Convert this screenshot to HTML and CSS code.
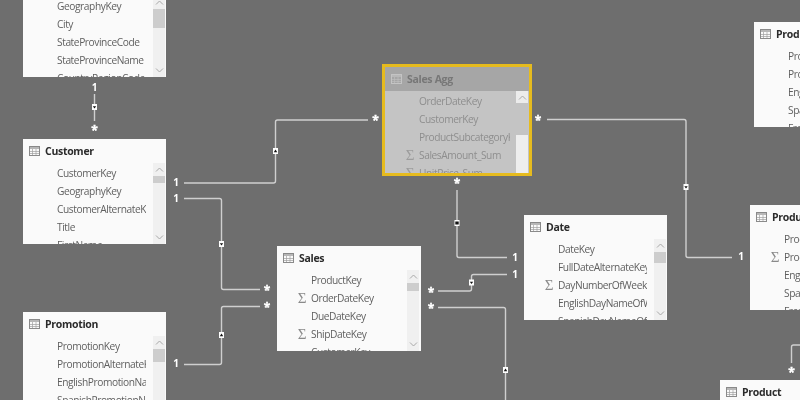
FILE: index.html
```html
<!DOCTYPE html>
<html lang="en">
<head>
<meta charset="utf-8">
<title>Model view</title>
<link rel="stylesheet" href="styles.css">
</head>
<body>
<svg width="0" height="0" class="defs">
  <defs>
    <g id="ticon">
      <rect x="0.5" y="0.5" width="10" height="9" fill="none" stroke="currentColor"/>
      <rect x="0.5" y="0.5" width="10" height="2.5" fill="currentColor" opacity=".6"/>
      <path d="M0 5.5H11M0 7.5H11M3.5 3V10M7 3V10" stroke="currentColor" stroke-width=".7" opacity=".8"/>
    </g>
  </defs>
</svg>
<main class="stage">
  <section class="table t-geo">
    <header class="head"><svg class="ticon" width="11" height="10"><use href="#ticon"/></svg><h2>Geography</h2></header>
    <div class="body">
      <div class="rows">
        <div class="row"><span class="name">GeographyKey</span></div>
        <div class="row"><span class="name">City</span></div>
        <div class="row"><span class="name">StateProvinceCode</span></div>
        <div class="row"><span class="name">StateProvinceName</span></div>
        <div class="row"><span class="name">CountryRegionCode</span></div>
      </div>
      <div class="scroll">
        <div class="btn"><svg width="9" height="5"><path d="M1 4.5L4.5 1L8 4.5" class="chev"/></svg></div>
        <div class="thumb th-19"></div>
        <div class="btn end"><svg width="9" height="5"><path d="M1 .5L4.5 4L8 .5" class="chev"/></svg></div>
      </div>
    </div>
  </section>

  <section class="table t-customer">
    <header class="head"><svg class="ticon" width="11" height="10"><use href="#ticon"/></svg><h2>Customer</h2></header>
    <div class="body">
      <div class="rows">
        <div class="row"><span class="name">CustomerKey</span></div>
        <div class="row"><span class="name">GeographyKey</span></div>
        <div class="row"><span class="name">CustomerAlternateKey</span></div>
        <div class="row"><span class="name">Title</span></div>
        <div class="row"><span class="name">FirstName</span></div>
      </div>
      <div class="scroll">
        <div class="btn"><svg width="9" height="5"><path d="M1 4.5L4.5 1L8 4.5" class="chev"/></svg></div>
        <div class="thumb th-7"></div>
        <div class="btn end"><svg width="9" height="5"><path d="M1 .5L4.5 4L8 .5" class="chev"/></svg></div>
      </div>
    </div>
  </section>

  <section class="table t-promotion">
    <header class="head"><svg class="ticon" width="11" height="10"><use href="#ticon"/></svg><h2>Promotion</h2></header>
    <div class="body">
      <div class="rows">
        <div class="row"><span class="name">PromotionKey</span></div>
        <div class="row"><span class="name">PromotionAlternateKey</span></div>
        <div class="row"><span class="name">EnglishPromotionName</span></div>
        <div class="row"><span class="name">SpanishPromotionName</span></div>
        <div class="row"><span class="name">FrenchPromotionName</span></div>
      </div>
      <div class="scroll">
        <div class="btn"><svg width="9" height="5"><path d="M1 4.5L4.5 1L8 4.5" class="chev"/></svg></div>
        <div class="thumb th-13"></div>
        <div class="btn end"><svg width="9" height="5"><path d="M1 .5L4.5 4L8 .5" class="chev"/></svg></div>
      </div>
    </div>
  </section>

  <section class="table t-sales">
    <header class="head"><svg class="ticon" width="11" height="10"><use href="#ticon"/></svg><h2>Sales</h2></header>
    <div class="body">
      <div class="rows">
        <div class="row"><span class="name">ProductKey</span></div>
        <div class="row"><span class="sig">Σ</span><span class="name">OrderDateKey</span></div>
        <div class="row"><span class="name">DueDateKey</span></div>
        <div class="row"><span class="sig">Σ</span><span class="name">ShipDateKey</span></div>
        <div class="row"><span class="name">CustomerKey</span></div>
      </div>
      <div class="scroll">
        <div class="btn"><svg width="9" height="5"><path d="M1 4.5L4.5 1L8 4.5" class="chev"/></svg></div>
        <div class="thumb th-8"></div>
        <div class="btn end"><svg width="9" height="5"><path d="M1 .5L4.5 4L8 .5" class="chev"/></svg></div>
      </div>
    </div>
  </section>

  <section class="table t-date">
    <header class="head"><svg class="ticon" width="11" height="10"><use href="#ticon"/></svg><h2>Date</h2></header>
    <div class="body">
      <div class="rows">
        <div class="row"><span class="name">DateKey</span></div>
        <div class="row"><span class="name">FullDateAlternateKey</span></div>
        <div class="row"><span class="sig">Σ</span><span class="name">DayNumberOfWeek</span></div>
        <div class="row"><span class="name">EnglishDayNameOfWeek</span></div>
        <div class="row"><span class="name">SpanishDayNameOfWeek</span></div>
      </div>
      <div class="scroll">
        <div class="btn"><svg width="9" height="5"><path d="M1 4.5L4.5 1L8 4.5" class="chev"/></svg></div>
        <div class="thumb th-11"></div>
        <div class="btn end"><svg width="9" height="5"><path d="M1 .5L4.5 4L8 .5" class="chev"/></svg></div>
      </div>
    </div>
  </section>

  <section class="table t-prod-top">
    <header class="head"><svg class="ticon" width="11" height="10"><use href="#ticon"/></svg><h2>ProductSubcategory</h2></header>
    <div class="body">
      <div class="rows">
        <div class="row"><span class="name">ProductSubcategoryKey</span></div>
        <div class="row"><span class="name">ProductSubcategoryAlt</span></div>
        <div class="row"><span class="name">EnglishProductSub</span></div>
        <div class="row"><span class="name">SpanishProductSub</span></div>
        <div class="row"><span class="name">FrenchProductSub</span></div>
      </div>
    </div>
  </section>

  <section class="table t-prod-mid">
    <header class="head"><svg class="ticon" width="11" height="10"><use href="#ticon"/></svg><h2>ProductCategory</h2></header>
    <div class="body">
      <div class="rows">
        <div class="row"><span class="name">ProductKey</span></div>
        <div class="row"><span class="sig">Σ</span><span class="name">ProductSubKey</span></div>
        <div class="row"><span class="name">EnglishName</span></div>
        <div class="row"><span class="name">SpanishName</span></div>
        <div class="row"><span class="name">FrenchName</span></div>
      </div>
    </div>
  </section>

  <section class="table t-product">
    <header class="head"><svg class="ticon" width="11" height="10"><use href="#ticon"/></svg><h2>Product</h2></header>
  </section>

  <svg class="links" width="800" height="400" viewBox="0 0 800 400">
    <g class="wire">
      <path d="M94.5 94V121"/>
      <path d="M184 183H273.5Q275.5 183 275.5 181V122Q275.5 120 277.5 120H368"/>
      <path d="M184 198.5H219.5Q221.5 198.5 221.5 200.5V287.5Q221.5 289.5 223.5 289.5H260"/>
      <path d="M184 364.5H219.5Q221.5 364.5 221.5 362.5V308.5Q221.5 306.5 223.5 306.5H260"/>
      <path d="M457 190V255.5Q457 257.5 459 257.5H507"/>
      <path d="M438 291H469.5Q471.5 291 471.5 289V276.5Q471.5 274.5 473.5 274.5H507"/>
      <path d="M438 307.5H503.5Q505.5 307.5 505.5 309.5V400"/>
      <path d="M547 119.5H684Q686 119.5 686 121.5V255.5Q686 257.5 688 257.5H732"/>
      <path d="M791.5 363V347Q791.5 345 793.5 345H800"/>
    </g>
    <g class="mark">
      <rect x="92" y="104" width="5" height="6"/><path d="M92.8 106.2H96.2L94.5 108.5Z" class="tri"/>
      <rect x="273" y="148" width="5" height="6"/><path d="M273.8 152.2H277.2L275.5 149.6Z" class="tri"/>
      <rect x="219" y="241" width="5" height="6"/><path d="M219.8 243.2H223.2L221.5 245.5Z" class="tri"/>
      <rect x="219" y="332" width="5" height="6"/><path d="M219.8 336.2H223.2L221.5 333.6Z" class="tri"/>
      <rect x="454.5" y="220" width="5" height="6"/><path d="M455.3 221.5H458.7V224.5H455.3Z" class="tri"/>
      <rect x="469" y="279.5" width="5" height="6"/><path d="M469.8 281.7H473.2L471.5 284Z" class="tri"/>
      <rect x="503" y="367" width="5" height="6"/><path d="M503.8 371.2H507.2L505.5 368.6Z" class="tri"/>
      <rect x="683.5" y="184" width="5" height="6"/><path d="M684.3 186.2H687.7L686 188.5Z" class="tri"/>
    </g>
    <g class="lab">
      <text x="94.5" y="90.5">1</text>
      <text x="176" y="185.5">1</text>
      <text x="176" y="201.5">1</text>
      <text x="176" y="366.5">1</text>
      <text x="515" y="260.5">1</text>
      <text x="515" y="277.5">1</text>
      <text x="741" y="259.5">1</text>
    </g>
    <g class="star">
      <text x="94.5" y="135">*</text>
      <text x="375.5" y="125">*</text>
      <text x="267" y="295">*</text>
      <text x="267" y="312">*</text>
      <text x="431" y="297">*</text>
      <text x="431" y="313">*</text>
      <text x="457" y="188">*</text>
      <text x="538" y="125">*</text>
      <text x="791.5" y="377">*</text>
    </g>
  </svg>

  <section class="table t-agg">
    <header class="head"><svg class="ticon" width="11" height="10"><use href="#ticon"/></svg><h2>Sales Agg</h2></header>
    <div class="body">
      <div class="rows">
        <div class="row"><span class="name">OrderDateKey</span></div>
        <div class="row"><span class="name">CustomerKey</span></div>
        <div class="row"><span class="name">ProductSubcategoryKey</span></div>
        <div class="row"><span class="sig">Σ</span><span class="name">SalesAmount_Sum</span></div>
        <div class="row"><span class="sig">Σ</span><span class="name">UnitPrice_Sum</span></div>
      </div>
      <div class="scroll">
        <div class="btn"><svg width="9" height="5"><path d="M1 4.5L4.5 1L8 4.5" class="chev"/></svg></div>
        <div class="thumb th-36"></div>
        <div class="btn end"><svg width="9" height="5"><path d="M1 .5L4.5 4L8 .5" class="chev"/></svg></div>
      </div>
    </div>
  </section>
</main>
</body>
</html>
```
FILE: styles.css
```css
* { box-sizing: border-box; }
html, body { margin: 0; padding: 0; overflow: hidden; }
.defs { position: absolute; }
.stage {
  position: relative;
  width: 800px;
  height: 400px;
  overflow: hidden;
  background: #6e6e6e;
  font-family: "Open Sans", "Noto Sans", sans-serif;
  filter: blur(0.3px);
}

.table {
  position: absolute;
  width: 143px;
  height: 105px;
  background: #fafafa;
  color: #5f5f5f;
  overflow: hidden;
  display: flex;
  flex-direction: column;
}
.t-geo { left: 23px; top: -28px; }
.t-customer { left: 23px; top: 139px; }
.t-promotion { left: 23px; top: 312px; }
.t-sales { left: 277px; top: 246px; height: 105px; width: 144px; }
.t-date { left: 524px; top: 215px; }
.t-prod-top { left: 754px; top: 22px; }
.t-prod-mid { left: 750px; top: 205px; }
.t-product { left: 720px; top: 380px; }

.head {
  flex: none;
  height: 24px;
  display: flex;
  align-items: center;
  gap: 5px;
  padding-left: 6px;
}
.ticon { flex: none; color: #8a8a8a; }
.head h2 {
  margin: 0;
  font-size: 10.5px;
  letter-spacing: -0.3px;
  font-weight: 700;
  color: #2b2b2b;
  white-space: nowrap;
}

.body { flex: 1; min-height: 0; display: flex; }
.rows { flex: none; width: 123px; padding-top: 1px; overflow: hidden; }
.row {
  height: 18px;
  padding-left: 20px;
  display: flex;
  align-items: center;
  font-size: 10.2px;
  letter-spacing: -0.42px;
  white-space: nowrap;
}
.name { display: block; margin-left: 14px; }
.sig {
  width: 10px;
  margin-right: -10px;
  font-family: "Liberation Serif", serif;
  font-size: 15px;
  letter-spacing: 0;
  color: #8a8a8a;
  text-align: center;
}

.scroll {
  flex: none;
  width: 12px;
  margin-left: 7px;
  display: flex;
  flex-direction: column;
  background: #f0f0f0;
}
.btn { flex: none; height: 13px; display: flex; align-items: center; justify-content: center; }
.btn.end { margin-top: auto; }
.chev { fill: none; stroke: #a8a8a8; stroke-width: 1; }
.thumb { flex: none; background: #cdcdcd; }
.th-7 { height: 7px; }
.th-8 { height: 8px; }
.th-11 { height: 11px; }
.th-13 { height: 13px; }
.th-19 { height: 19px; }
.th-36 { height: 36px; }

.links { position: absolute; left: 0; top: 0; }
.wire path { fill: none; stroke: #cfcfcf; stroke-width: 1.4; }
.mark rect { fill: #fff; }
.tri { fill: #111; }
.lab text, .star text {
  font-family: "Open Sans", sans-serif;
  font-weight: 700;
  fill: #fff;
  text-anchor: middle;
}
.lab text { font-size: 10px; }
.star text { font-size: 12px; stroke: #fff; stroke-width: .4; }

.t-agg {
  left: 382px;
  top: 64px;
  width: 150px;
  height: 112px;
  border: 3px solid #e6bb1e;
  background: #c4c4c4;
  color: #8e8e8e;
}
.t-agg .head { background: #a6a6a6; height: 24px; padding-left: 6px; }
.t-agg .ticon { color: #c4c4c4; }
.t-agg .head h2 { color: #777; }
.t-agg .rows { width: 125px; }
.t-agg .row { padding-left: 20px; }
.t-agg .sig { color: #9c9c9c; }
.t-agg .scroll { margin-left: 6px; width: 12px; background: #c4c4c4; }
.t-agg .btn:first-child { background: #ececec; height: 12px; }
.t-agg .thumb { margin-top: 32px; background: #eeeeee; height: 36px; margin-bottom: -1px; }
.t-agg .btn.end { background: #eeeeee; margin-top: 0; }
```
